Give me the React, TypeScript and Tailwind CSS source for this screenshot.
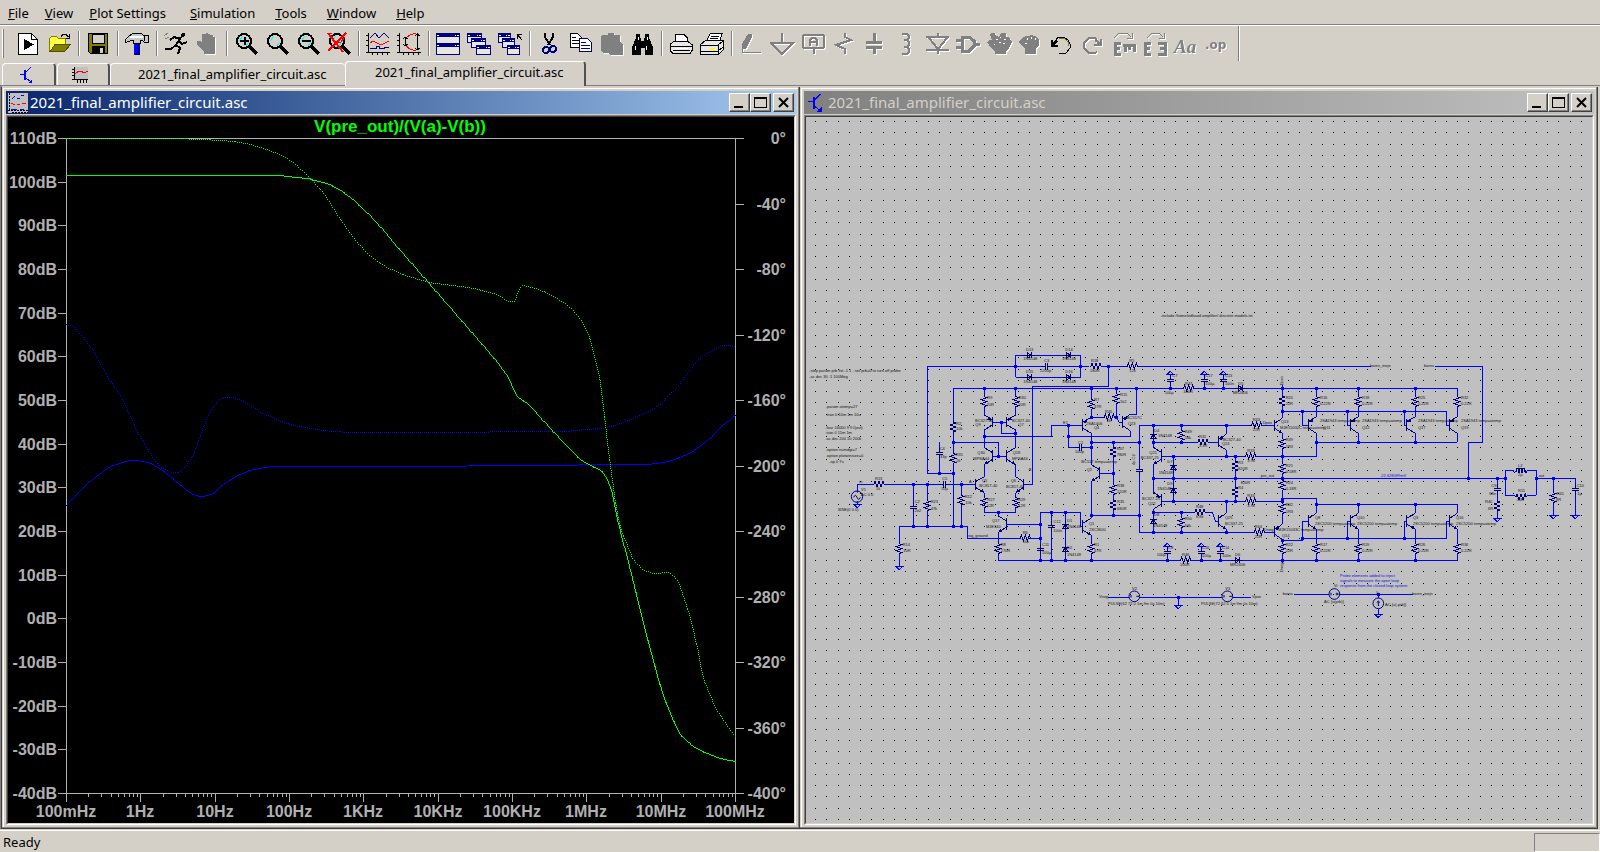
import type { ReactNode } from "react"
import { clsx } from "clsx"

type Point = [number, number]

const FILE_NAME = "2021_final_amplifier_circuit.asc"

const menus = ["File", "View", "Plot Settings", "Simulation", "Tools", "Window", "Help"]

/* ---------- toolbar icons, drawn on a 25x25 grid ---------- */

function Magnifier({ children }: { children?: ReactNode }) {
  return (
    <>
      <path d="M15 14l8 8" stroke="#000" strokeWidth="3" />
      <circle cx="10" cy="9" r="7" fill="#d4d0c8" stroke="#000" strokeWidth="2" />
      <path d="M5 9l4-5M12 14l3-4" stroke="#00ffff" strokeWidth="1" />
      {children}
    </>
  )
}

function MiniWindow({ x, y, w, h }: { x: number; y: number; w: number; h: number }) {
  return (
    <>
      <rect x={x} y={y} width={w} height={h} fill="#000080" />
      <rect x={x + 1} y={y + 4} width={w - 2} height={h - 5} fill="#e8e6e0" />
      <path d={`M${x + 1} ${y + 2}h2M${x + w - 5} ${y + 2}h1M${x + w - 3} ${y + 2}h2`} stroke="#fff" strokeWidth="1" />
    </>
  )
}

const icons: Record<string, ReactNode> = {
  Run: (
    <>
      <path d="M2.500 1.500h13l6 6v15h-19z" fill="#fff" stroke="#000" />
      <path d="M15.500 1.500v6h6" stroke="#000" />
      <path d="M8 7l10 5.500L8 18z" fill="#000" />
    </>
  ),
  Open: (
    <>
      <path d="M2.500 19.500v-13l2-2h5l2 2h7v6" fill="#ffff40" stroke="#808000" />
      <path d="M3 19.500l5-7h15.500l-6 7z" fill="#808000" stroke="#505000" />
      <path d="M14 4.500c2-3 5-3 7.500.500M22.500 2v4h-4" stroke="#000" />
    </>
  ),
  Save: (
    <>
      <path d="M2.500 1.500h19v20h-17l-2-2z" fill="#808000" stroke="#000" />
      <rect x="6" y="2" width="12" height="9" fill="#d4d0c8" stroke="#000" />
      <rect x="6" y="14" width="13" height="8" fill="#000" />
      <rect x="14" y="16" width="3" height="5" fill="#d4d0c8" />
    </>
  ),
  "Control Panel": (
    <>
      <path d="M9 11h6v11h-6z" fill="#0000ff" />
      <path d="M14 11v11h-5" stroke="#000080" strokeWidth="2" />
      <path d="M.500 10.500v-3l3-3l4-3h9l2 2h5v7h-4l-2-2h-2v3h-7v-3h-2l-3 1z" fill="#c8c8c8" stroke="#000" />
      <path d="M5 4.500h13" stroke="#fff" strokeWidth="2" />
      <path d="M19 3v6" stroke="#000" />
    </>
  ),
  Simulate: (
    <>
      <path d="M0 4l4-3M1 7l4-2M5 8l3-2" stroke="#808080" />
      <circle cx="19" cy="3" r="2" fill="#000" />
      <path d="M17 5l-5 8M16 7l-6-2l-4 3M15 9l3 3l5-2" stroke="#000" strokeWidth="2" />
      <path d="M12 13l-5 4l-6 0M12 13l4 3l-2 6" stroke="#000" strokeWidth="2" />
    </>
  ),
  Halt: <path d="M9 2h2v-1h2v1h2v1h3v2h2v17h-11v-3l-3-2l-4-5v-3h3l2 2v-9h2z" fill="currentColor" />,
  "Zoom In": (
    <Magnifier>
      <path d="M6 9h9M10.500 5v8" stroke="#000" strokeWidth="2" />
    </Magnifier>
  ),
  "Zoom Area": <Magnifier />,
  "Zoom Out": (
    <Magnifier>
      <path d="M6 9h9" stroke="#000" strokeWidth="2" />
    </Magnifier>
  ),
  "Zoom Full": (
    <Magnifier>
      <path d="M1 1l15 19M19 1l-18 18" stroke="#ff0000" strokeWidth="2" />
      <path d="M0 1h5M5 8l8 3l5-6" stroke="#ff0000" />
    </Magnifier>
  ),
  "Autorange Y": (
    <>
      <path d="M2.500 1v19M0 20.500h24M0 3.500h2M0 8.500h2M0 13.500h2M6.500 20v3M11.500 20v3M16.500 20v3M21.500 20v3" stroke="#000" />
      <path d="M4 6l5-5l4 5l5-5l5 5" stroke="#000080" />
      <path d="M4 11l3-2l6 3h4l6-3" stroke="#ff0000" />
      <path d="M4 16h6v-2h3v2h5v-1h5" stroke="#000080" />
    </>
  ),
  "Pan Plot": (
    <>
      <path d="M2.500 1v19M0 20.500h24M0 3.500h2M0 8.500h2M0 13.500h2M6.500 20v3M11.500 20v3M16.500 20v3M21.500 20v3" stroke="#000" />
      <path d="M9 6l4-3l6-2M9 14l4 3l6 2" stroke="#ff0000" />
      <path d="M8.500 5v9M6 7l2-2l3 2M6 12l2 2l3-2M20.500 1v17M18 4l2-2l3 2M18 16l2 2l3-2" stroke="#000" />
    </>
  ),
  "Tile Windows": (
    <>
      <MiniWindow x={0} y={1} w={24} h={11} />
      <MiniWindow x={0} y={11} w={24} h={12} />
    </>
  ),
  "Cascade Windows": (
    <>
      <MiniWindow x={0} y={1} w={15} h={10} />
      <MiniWindow x={4} y={6} w={15} h={10} />
      <MiniWindow x={9} y={13} w={15} h={10} />
    </>
  ),
  "Close Windows": (
    <>
      <MiniWindow x={0} y={1} w={13} h={10} />
      <MiniWindow x={4} y={6} w={13} h={10} />
      <MiniWindow x={9} y={13} w={13} h={10} />
      <path d="M19 7v-5h5M19 2l5 6" stroke="#000" />
    </>
  ),
  Cut: (
    <>
      <path d="M8 1v4l5 8M16 1v4l-5 8" stroke="#000" strokeWidth="2" />
      <circle cx="9" cy="18" r="3" stroke="#000080" strokeWidth="2" />
      <circle cx="16" cy="17" r="3" stroke="#000080" strokeWidth="2" />
    </>
  ),
  Copy: (
    <>
      <path d="M2.500 1.500h7l4 4v10h-11z" fill="#fff" stroke="#000" />
      <path d="M4 5h4M4 8h7M4 11h7" stroke="#000" />
      <path d="M11.500 6.500h8l4 4v9h-12z" fill="#fff" stroke="#000080" />
      <path d="M13 10h5M13 13h9M13 16h9" stroke="#000080" />
    </>
  ),
  Paste: <path d="M2 4l2-1h5v-2h6v2h6v7l3 3v10h-13l-2-2h-5l-2-2z" fill="currentColor" />,
  Find: (
    <>
      <path d="M6 2h4v4h1v3h3v-3h1v-4h4v4l4 9v8h-8v-7h-4v7h-9v-8l4-9z" fill="#000" />
      <path d="M8 5v3M17 5v3M5 14v4M16 14v4" stroke="#fff" />
    </>
  ),
  Print: (
    <>
      <path d="M6.500 10v-7l2-1h6l4 4v4z" fill="#fff" stroke="#000" />
      <path d="M2 11.500l3-2h14l4 3v6l-2 3h-17l-3-3v-5z" fill="#e8e8e8" stroke="#000" />
      <path d="M2 14h21M4 18h17" stroke="#000" />
      <path d="M6 16h13" stroke="#fff" />
    </>
  ),
  "Print Setup": (
    <>
      <path d="M6.500 9l4-8h12l-3 8z" fill="#fff" stroke="#000" />
      <path d="M11 4h8M10 6h8" stroke="#000" />
      <path d="M.500 12.500l5-4h18v9l-5 5h-18z" fill="#e8e8e8" stroke="#000" />
      <path d="M0 13.500h18.500v9M18 13l5-4M0 19h18l5-4" stroke="#000" />
      <path d="M10 16.500h5" stroke="#ffff00" strokeWidth="2" />
    </>
  ),
  Wire: (
    <>
      <path d="M9 2h4v3l-6 12h-4v-5z" fill="currentColor" />
      <path d="M3 15v6M3 20.500h19" stroke="currentColor" strokeWidth="1" />
    </>
  ),
  Ground: <path d="M12 1v10M1 11h22l-11 11z" stroke="currentColor" strokeWidth="2" />,
  "Label Net": (
    <>
      <rect x="2" y="3" width="21" height="13" rx="2" stroke="currentColor" strokeWidth="2" />
      <path d="M12.500 16v6" stroke="currentColor" strokeWidth="2" />
      <path d="M9 14v-6l2-2h3l2 2v6M9 10h7" stroke="currentColor" strokeWidth="2" />
    </>
  ),
  Resistor: <path d="M13 1v4l6 3l-15 5l9 4v5" stroke="currentColor" strokeWidth="2" />,
  Capacitor: <path d="M11 1v8M3 10h16M3 15h16M11 15v7" stroke="currentColor" strokeWidth="3" />,
  Inductor: <path d="M8 2h5l2 2v2l-2 2h-3h3l2 2v3l-2 2h-3h3l2 2v3l-2 2h-5" stroke="currentColor" strokeWidth="2" />,
  Diode: <path d="M13 1v4M1 5h23M4 6l9 11l9-11M1 18h23M13 18v4" stroke="currentColor" strokeWidth="2" />,
  Component: <path d="M6 5h7l5 4v5l-5 5h-7zM0 8h5M0 15h5M18 12h6" stroke="currentColor" strokeWidth="3" />,
  Move: (
    <>
      <path d="M4 1h4l1 3l3 1l2-4h5v4h3l3 5l-3 6l-3 3v3h-11v-3l-4-3l-4-6l2-2h3l-2-5z" fill="currentColor" />
      <path d="M9 7h2M13 5h1M17 7h2M12 10h2M16 11h2M7 12h1" stroke="#fff" />
    </>
  ),
  Drag: (
    <>
      <path d="M5 5l3-1h3l2-1l3 1l3 1l2 3v5l-3 4v5h-11v-5l-6-6l1-3z" fill="currentColor" />
      <path d="M9 6v2M13 5v2M17 6v2M7 11h2" stroke="#fff" />
    </>
  ),
  Undo: (
    <>
      <path d="M4 12l5-7h6l4 3l2 4v4l-4 5h-7" stroke="#000" strokeWidth="1" />
      <path d="M10 6h5l4 4v4" stroke="#808000" />
      <path d="M3 8v6h6M4 13l4-4" stroke="#000" strokeWidth="2" />
    </>
  ),
  Redo: (
    <>
      <path d="M19 12l-4-6h-6l-5 5v5l5 5h6l2-1" stroke="currentColor" strokeWidth="2" />
      <path d="M21 7v6h-7M20 12l-5-4" stroke="currentColor" strokeWidth="2" />
    </>
  ),
  Rotate: (
    <>
      <path d="M3 6l5-5h8l4 4M21 1v5h-5" stroke="currentColor" />
      <path d="M10 11h-6v11h6M4 16h5" stroke="currentColor" strokeWidth="3" />
      <path d="M12 13h13M14 12v8M18 12v6M23 12v8" stroke="currentColor" strokeWidth="3" />
    </>
  ),
  Mirror: (
    <>
      <path d="M5 6l5-5h7l4 4M22 1v5h-5" stroke="currentColor" />
      <path d="M9 11h-6v11h6M3 16h5M16 11h7v11h-7M23 16h-5" stroke="currentColor" strokeWidth="3" />
    </>
  ),
  Text: (
    <text x="1" y="21" fontFamily="Liberation Serif, serif" fontStyle="italic" fontWeight="bold" fontSize="19" fill="currentColor">
      Aa
    </text>
  ),
  "SPICE Directive": (
    <text x="1" y="17" fontFamily="DejaVu Sans, sans-serif" fontWeight="bold" fontSize="12" fill="currentColor">
      .op
    </text>
  ),
}

const toolGroups = [
  ["Run", "Open"],
  ["Save"],
  ["Control Panel"],
  ["Simulate", "Halt"],
  ["Zoom In", "Zoom Area", "Zoom Out", "Zoom Full"],
  ["Autorange Y", "Pan Plot"],
  ["Tile Windows", "Cascade Windows", "Close Windows"],
  ["Cut", "Copy", "Paste", "Find"],
  ["Print", "Print Setup"],
  [
    "Wire", "Ground", "Label Net", "Resistor", "Capacitor", "Inductor", "Diode", "Component",
    "Move", "Drag", "Undo", "Redo", "Rotate", "Mirror", "Text", "SPICE Directive",
  ],
]

const disabledTools = new Set(["Halt", "Paste", ...toolGroups[9].filter((name) => name !== "Undo")])

function MenuBar() {
  return (
    <nav className="flex h-[25px] shrink-0 items-end border-b border-[#808080] pb-px text-[13px] leading-5">
      {menus.map((name, i) => (
        <button key={name} type="button" className={clsx(i < 2 && "px-2", i === 2 && "pl-2 pr-3.5", i > 2 && "px-2.5")}>
          <span className="underline">{name[0]}</span>
          {name.slice(1)}
        </button>
      ))}
    </nav>
  )
}

function Toolbar() {
  return (
    <div className="flex h-[37px] shrink-0 items-start border-t border-white">
      <div className="mt-[3px] ml-0.5 mr-[9px] h-[29px] w-0.5 border-r border-[#808080] bg-white" />
      {toolGroups.map((group, i) => (
        <div key={group[0]} className="flex shrink-0">
          {i > 0 && (
            <div className="flex w-2 justify-center pt-[5px]">
              <div className="h-[25px] w-0.5 border-l border-[#808080] bg-white" />
            </div>
          )}
          {group.map((name) => {
            const disabled = disabledTools.has(name)
            return (
              <button key={name} type="button" aria-label={name} disabled={disabled} className="h-8 w-[31px] px-[3px] pt-1">
                <svg
                  viewBox="0 0 25 25"
                  fill="none"
                  shapeRendering="crispEdges"
                  className={clsx("h-[25px] w-[25px]", disabled && "text-[#808080] drop-shadow-[1px_1px_0_#fff]")}
                >
                  {icons[name]}
                </svg>
              </button>
            )
          })}
        </div>
      ))}
      <div className="ml-1.5 h-[35px] w-0.5 border-l border-[#808080] bg-white" />
    </div>
  )
}

function TransistorGlyph({ className }: { className?: string }) {
  return (
    <svg viewBox="0 0 14 18" fill="none" shapeRendering="crispEdges" className={className}>
      <path d="M0 8h5" stroke="#0000ff" strokeWidth="1" />
      <path d="M5 4v10" stroke="#0000ff" strokeWidth="2" />
      <path d="M6 6l5-5M6 12l5 4" stroke="#0000ff" />
      <path d="M12 17h-4l4-4z" fill="#0000ff" />
    </svg>
  )
}

function PlotGlyph({ className }: { className?: string }) {
  return (
    <svg viewBox="0 0 16 16" fill="none" shapeRendering="crispEdges" className={className}>
      <rect x="2" width="14" height="13" fill="#c0c0c0" />
      <path d="M2.500 0v13M0 12.500h16M0 2.500h2M0 5.500h2M0 8.500h2M5.500 13v3M8.500 13v3M11.500 13v3M14.500 13v3" stroke="#000" />
      <path d="M3 7l4-3h2l3 2l4-2" stroke="#ff0000" />
    </svg>
  )
}

function TabStrip() {
  const tab = "shrink-0 rounded-t-sm border-l border-t border-l-white border-t-white"
  const edge = "border-r-2 border-r-[#505050]"
  return (
    <div role="tablist" className="flex h-6 shrink-0 items-end border-b border-[#808080] pl-0.5 text-[13px]">
      <button role="tab" aria-label="Schematic" className={clsx(tab, edge, "flex h-[22px] w-[54px] items-center pl-[17px]")}>
        <TransistorGlyph className="h-[18px] w-3.5" />
      </button>
      <button role="tab" aria-label="Waveform" className={clsx(tab, edge, "ml-px flex h-[22px] w-[53px] items-center pl-3.5")}>
        <PlotGlyph className="h-4 w-4" />
      </button>
      <button role="tab" className={clsx(tab, "h-[22px] w-[235px] pl-[27px] text-left")}>
        {FILE_NAME}
      </button>
      <button role="tab" aria-selected className={clsx(tab, edge, "-mb-px h-[25px] w-[241px] bg-[#d4d0c8] pb-0.5 pl-[29px] text-left")}>
        {FILE_NAME}
      </button>
    </div>
  )
}

/* ---------- MDI child window ---------- */

const captionGlyphs: Record<string, ReactNode> = {
  Minimize: <rect x="3" y="12" width="9" height="2" fill="#000" />,
  Maximize: <path d="M2 3h13v11h-13zM3 5v8h11v-8z" fill="#000" fillRule="evenodd" />,
  Close: <path d="M4 4l9 9M13 4l-9 9" stroke="#000" strokeWidth="2" />,
}

interface ChildWindowProps {
  active?: boolean
  icon: ReactNode
  children: ReactNode
}

function ChildWindow({ active = false, icon, children }: ChildWindowProps) {
  return (
    <section className="flex min-w-0 flex-1 border-r border-b border-[#404040] bg-[#d4d0c8]">
      <div className="flex min-w-0 flex-1 flex-col border-r border-b border-[#808080] pl-px pt-px">
        <div className="flex min-h-0 flex-1 flex-col border-l border-t border-white p-0.5">
          <header
            className={clsx(
              "flex h-[23px] shrink-0 items-center bg-linear-to-r px-0.5 text-[15px]",
              active ? "from-[#0a246a] to-[#a6caf0] text-white" : "from-[#808080] to-[#c0c0c0] text-[#d4d0c8]",
            )}
          >
            <span className="flex h-5 w-5 items-center justify-center">{icon}</span>
            <h2 className="ml-0.5 flex-1 truncate pb-0.5 leading-5">{FILE_NAME}</h2>
            {Object.entries(captionGlyphs).map(([name, glyph]) => (
              <button
                key={name}
                type="button"
                aria-label={name}
                className="flex h-[19px] w-[21px] items-center justify-center border border-t-white border-l-white border-r-[#404040] border-b-[#404040] bg-[#d4d0c8] shadow-[inset_-1px_-1px_0_#808080] last:ml-0.5"
              >
                <svg viewBox="0 0 17 17" fill="none" className="h-[17px] w-[17px]">
                  {glyph}
                </svg>
              </button>
            ))}
          </header>
          <div className="mt-px flex min-h-0 flex-1 border border-t-[#808080] border-l-[#808080] border-r-white border-b-white">
            <div className="min-w-0 flex-1 border border-t-[#404040] border-l-[#404040] border-r-[#d4d0c8] border-b-[#d4d0c8]">
              {children}
            </div>
          </div>
        </div>
      </div>
    </section>
  )
}

/* ---------- bode plot ---------- */

const gainTrace: Point[] = [
  [66, 175], [276, 175], [296, 177], [306, 178], [315, 180], [326, 183], [340, 190], [350, 197], [362, 208],
  [376, 222], [400, 250], [460, 319], [500, 366], [507, 376], [512, 386], [517, 396], [522, 400], [527, 403],
  [538, 415], [567, 446], [578, 457], [588, 464], [600, 470], [605, 476], [610, 487], [618, 523], [627, 558],
  [647, 638], [662, 692], [670, 713], [680, 734], [687, 741], [696, 748], [707, 753], [720, 758], [735, 761],
]

const phaseTrace: Point[] = [
  [66, 138], [170, 138], [200, 139], [220, 140], [240, 142], [260, 147], [283, 156], [303, 171], [312, 180],
  [323, 193], [333, 208], [350, 233], [367, 253], [380, 263], [400, 273], [415, 278], [430, 282], [467, 287],
  [490, 292], [500, 296], [508, 301], [513, 301], [518, 291], [523, 285], [528, 286], [547, 293], [567, 305],
  [580, 319], [587, 331], [593, 353], [599, 377], [603, 407], [608, 450], [612, 480], [616, 508], [622, 533],
  [627, 545], [632, 557], [638, 565], [647, 571], [655, 573], [666, 572], [672, 575], [677, 581], [687, 608],
  [697, 648], [703, 677], [715, 706], [725, 723], [735, 736],
]

const secondPhaseTrace: Point[] = [
  [66, 324], [73, 327], [80, 334], [92, 349], [102, 367], [114, 387], [122, 399], [133, 423], [143, 442],
  [153, 458], [163, 468], [172, 472], [178, 472], [185, 466], [192, 455], [200, 435], [207, 417], [215, 404],
  [222, 398], [230, 397], [238, 399], [263, 413], [287, 423], [310, 428], [333, 431], [360, 432], [486, 432],
  [490, 431], [560, 431], [585, 429], [600, 428], [620, 423], [637, 416], [655, 407], [677, 386], [688, 372],
  [700, 358], [712, 350], [723, 345], [735, 346],
]

const secondGainTrace: Point[] = [
  [66, 505], [83, 487], [100, 473], [113, 465], [132, 460], [147, 462], [163, 471], [183, 487], [193, 494],
  [200, 496], [210, 494], [223, 484], [240, 474], [253, 469], [277, 466], [466, 466], [468, 465], [576, 465],
  [579, 464], [642, 464], [663, 462], [677, 458], [690, 452], [707, 440], [720, 427], [735, 415],
]

// Cubic interpolation through the points, plotted as single pixels every `step` along the longer axis.
function plotPixels(points: Point[], step: number) {
  const n = points.length
  const slopes = points.slice(1).map(([x, y], i) => (y - points[i][1]) / (x - points[i][0]))
  const tangents = points.map((_, i) => {
    if (i === 0) return slopes[0]
    if (i === n - 1) return slopes[n - 2]
    const a = slopes[i - 1]
    const b = slopes[i]
    return a * b <= 0 ? 0 : (2 * a * b) / (a + b)
  })

  let d = ""
  let lastX = -100
  let lastY = -100
  for (let i = 0; i < n - 1; i++) {
    const [x0, y0] = points[i]
    const [x1, y1] = points[i + 1]
    const w = x1 - x0
    const samples = Math.ceil((w + Math.abs(y1 - y0)) * 8)
    for (let s = 0; s < samples; s++) {
      const t = s / samples
      const x = x0 + w * t
      const y =
        (2 * t ** 3 - 3 * t ** 2 + 1) * y0 +
        (t ** 3 - 2 * t ** 2 + t) * w * tangents[i] +
        (3 * t ** 2 - 2 * t ** 3) * y1 +
        (t ** 3 - t ** 2) * w * tangents[i + 1]
      if (Math.max(Math.abs(x - lastX), Math.abs(y - lastY)) >= step - 0.1) {
        d += `M${Math.round(x)} ${Math.round(y)}h1v1h-1z`
        lastX = x
        lastY = y
      }
    }
  }
  return d
}

const LEFT = 66
const RIGHT = 735
const TOP = 138
const BOTTOM = 793

const freqLabels = ["100mHz", "1Hz", "10Hz", "100Hz", "1KHz", "10KHz", "100KHz", "1MHz", "10MHz", "100MHz"]

function BodePlot() {
  const decade = (RIGHT - LEFT) / 9
  const gains = Array.from({ length: 16 }, (_, i) => 110 - i * 10)
  const phases = Array.from({ length: 11 }, (_, i) => -40 * i)

  return (
    <svg
      viewBox="8 117 786 706"
      preserveAspectRatio="xMidYMid meet"
      className="block h-full w-full bg-black"
      fontFamily="Liberation Sans, Arial, sans-serif"
      fontWeight="bold"
      fontSize="16"
    >
      <text x="400" y="132" textAnchor="middle" fill="#00ff00" fontSize="17">
        V(pre_out)/(V(a)-V(b))
      </text>
      <g fill="#b0b0b0">
        {gains.map((db, i) => (
          <text key={db} x="57" y={Math.round(TOP + (i * (BOTTOM - TOP)) / 15) + 6} textAnchor="end">
            {db}dB
          </text>
        ))}
        {phases.map((deg, i) => (
          <text key={deg} x="786" y={Math.round(TOP + (i * (BOTTOM - TOP)) / 10) + 6} textAnchor="end">
            {deg}°
          </text>
        ))}
        {freqLabels.map((label, i) => (
          <text key={label} x={Math.round(LEFT + i * decade)} y="817" textAnchor="middle">
            {label}
          </text>
        ))}
      </g>
      <g shapeRendering="crispEdges">
        <g fill="#b0b0b0">
          <rect x={LEFT} y={TOP} width={RIGHT - LEFT} height="1" />
          <rect x={LEFT} y={BOTTOM} width={RIGHT - LEFT} height="1" />
          <rect x={LEFT} y={TOP} width="1" height={BOTTOM - TOP} />
          <rect x={RIGHT} y={TOP} width="1" height={BOTTOM - TOP} />
          {gains.map((db, i) => (
            <rect key={db} x={LEFT - 8} y={Math.round(TOP + (i * (BOTTOM - TOP)) / 15)} width="8" height="1" />
          ))}
          {phases.map((deg, i) => (
            <rect key={deg} x={RIGHT} y={Math.round(TOP + (i * (BOTTOM - TOP)) / 10)} width="9" height="1" />
          ))}
          {freqLabels.map((label, i) => (
            <rect key={label} x={Math.round(LEFT + i * decade)} y={BOTTOM} width="1" height="9" />
          ))}
          {freqLabels.slice(1).flatMap((label, i) =>
            [2, 3, 4, 5, 6, 7, 8, 9].map((m) => (
              <rect key={label + m} x={Math.round(LEFT + (i + Math.log10(m)) * decade)} y={BOTTOM} width="1" height="4" />
            )),
          )}
        </g>
        <path d={plotPixels(secondPhaseTrace, 2)} fill="#0000ff" />
        <path d={plotPixels(secondGainTrace, 1)} fill="#0000ff" />
        <path d={plotPixels(phaseTrace, 2)} fill="#00ff00" />
        <path d={plotPixels(gainTrace, 1)} fill="#00ff00" />
      </g>
    </svg>
  )
}

/* ---------- schematic ---------- */

const wires = [
  // feedback line and anti-parallel diodes
  "M382 520V199H732M744 199H868M905 199H978M1014 199H1712",
  "M647 166V232M647 166H841V232H647M925 199V259H697V553H670",
  // supply rails
  "M460 265H1147M1183 265H1972M595 781H1138M1174 781H1972",
  // input stage
  "M382 520H460M460 265V362M460 398V457M460 490V679M460 427H595V469M418 427V458M418 464V520",
  "M553 265V286M553 322V345M647 265V286M647 322V345M578 367H620M604 367V400H647M553 388V443M647 388V443",
  "M578 469H620M553 409H755V376H847M553 494V530M647 494V530",
  "M553 578V590M553 625V637H647V625M647 578V590M595 637V648M620 673H722M595 697V727M595 763V781",
  "M172 575V553H218M254 553H430M438 553H526M340 553V619M340 624V679M382 553V598M382 634V679",
  "M484 553V582M484 618V679M298 679H502V715H657M692 715H722M298 679V727M298 763V798M172 606V613",
  "M722 637V745M722 751V781M722 637H842V679H847M754 637V678M754 683V781M796 637V781",
  // voltage gain stage
  "M874 265V294M874 330V352H909M945 352H949M949 265V277M949 313V352L958 367H967M1009 265V343H991M991 392V409H805",
  "M805 376V442H836M843 442H874M874 400V494M874 427H1018M940 427V437M940 473V550M940 586V596M940 632V646",
  "M940 520H899M874 544V655M874 646H1018M874 706V727M874 763V781",
  "M1018 376V508M1018 514V697M1018 376H1351M1387 376H1423M1018 697H1359M1395 697H1423",
  // protection and drivers
  "M1060 376V442M1060 427H1190M1226 427H1255M1144 376V387M1144 423V427M1279 376V403M1279 450V469",
  "M1060 494V577M1084 469H1333M1369 469H1549V427M1120 469V604M1060 535H2116M1306 469V479M1306 515V557M1306 593V604",
  "M1084 604H1333M1369 604H1447M1447 595H1549V613M1060 628V697M1060 637H1181M1217 637H1237L1246 664H1255",
  "M1279 604V640M1279 688V697M1144 637V649M1144 685V697",
  "M1447 256V284M1447 320V355M1447 400V412M1447 448V487M1447 523V540M1447 571V607M1447 643V673M1447 718V727M1447 763V790",
  "M1447 334H1939V376H1948M1447 721H1507V664H1525M1507 715H1939V664H1948",
  "M1507 334V376H1525M1642 334V376H1651M1813 334V376H1819M1642 715V664H1651M1813 715V664H1819",
  "M1549 427H1972M1549 613H1972",
  "M1549 265V286M1675 265V286M1846 265V286M1972 265V286M1549 322V350M1675 322V350M1846 322V350M1972 322V350",
  "M1549 400V427M1675 400V427M1846 400V427M1972 400V427M1549 613V640M1675 613V640M1846 613V640M1972 613V640",
  "M1549 688V727M1675 688V727M1846 688V727M1972 688V727M1549 763V781M1675 763V781M1846 763V781M1972 763V781",
  // rail decoupling
  "M1111 265V244M1111 238V224M1213 265V244M1213 238V224M1270 265V244M1270 238V224",
  "M1102 781V760M1102 754V740M1204 781V760M1204 754V740M1261 781V760M1261 754V740",
  // output network
  "M1905 199H2047V427H2005V535M2092 535V567M2092 572V599M2092 635V655M2116 511V586M2116 511H2142M2182 511H2209V586",
  "M2116 586H2144M2180 586H2209M2209 535H2326M2260 535V574M2260 610V646M2326 535V567M2326 572V646",
  // probes and supplies
  "M924 892H987M1019 892H1266M1298 892H1354M1135 892V915M1482 883H1587M1619 883H1839M1735 883V894M1735 926V943",
]

const junctions: Point[] = [
  [647, 199], [841, 199], [925, 199], [553, 265], [647, 265], [874, 265], [949, 265], [1009, 265], [1111, 265],
  [1213, 265], [1270, 265], [1447, 265], [1549, 265], [1675, 265], [1846, 265], [604, 367], [647, 400], [553, 409],
  [460, 427], [595, 469], [418, 520], [460, 520], [340, 553], [382, 553], [484, 553], [340, 679], [382, 679],
  [460, 679], [484, 679], [595, 637], [722, 673], [722, 715], [754, 637], [796, 637], [722, 781], [754, 781],
  [796, 781], [874, 781], [1102, 781], [1204, 781], [1261, 781], [1447, 781], [1549, 781], [1675, 781], [1846, 781],
  [874, 352], [949, 352], [805, 376], [805, 409], [874, 427], [874, 442], [940, 427], [1018, 427], [940, 520],
  [874, 646], [940, 646], [1018, 646], [1060, 376], [1144, 376], [1279, 376], [1060, 427], [1144, 427],
  [1120, 469], [1279, 469], [1306, 469], [1447, 469], [1060, 535], [1120, 535], [1306, 535], [1447, 535],
  [1120, 604], [1279, 604], [1306, 604], [1447, 604], [1447, 598], [1060, 637], [1144, 637], [1060, 697],
  [1144, 697], [1279, 697], [1447, 334], [1507, 334], [1642, 334], [1813, 334], [1447, 721], [1507, 715],
  [1642, 715], [1813, 715], [1549, 427], [1675, 427], [1846, 427], [1549, 613], [1675, 613], [1846, 613],
  [2005, 535], [2092, 535], [2116, 535], [2209, 535], [2260, 535], [1135, 892], [1735, 883],
]

const verticalResistors: Point[] = [
  [460, 380], [460, 474], [553, 304], [647, 304], [553, 607], [647, 607], [595, 745], [382, 616], [484, 600],
  [298, 745], [874, 312], [949, 295], [940, 455], [940, 568], [940, 614], [874, 745], [1144, 405], [1306, 497],
  [1306, 575], [1144, 667], [1447, 302], [1447, 430], [1447, 505], [1447, 555], [1447, 625], [1447, 745],
  [1549, 304], [1675, 304], [1846, 304], [1972, 304], [1549, 745], [1675, 745], [1846, 745], [1972, 745],
  [2092, 617], [2260, 592],
]

const horizontalResistors: Point[] = [
  [887, 199], [996, 199], [236, 553], [675, 715], [927, 352], [1165, 265], [1156, 781], [1369, 376], [1377, 697],
  [1208, 427], [1351, 469], [1351, 604], [1199, 637], [2162, 590],
]

const verticalCaps: Point[] = [
  [418, 461], [340, 621], [722, 748], [754, 680], [1018, 511], [1111, 241], [1213, 241], [1270, 241],
  [1102, 757], [1204, 757], [1261, 757], [2092, 569], [2326, 569],
]

const horizontalCaps: Point[] = [[738, 199], [434, 553], [840, 442]]

const horizontalDiodes: Point[] = [[688, 166], [806, 166], [688, 232], [806, 232], [1322, 265], [1312, 781]]

const verticalDiodes: Point[] = [[796, 679], [796, 748], [1060, 409], [1120, 502], [1120, 571], [1060, 664]]

// base bar x, collector/emitter column x, top pin y, bottom pin y, end that carries the arrow
const transistors: [number, number, number, number, "top" | "bottom"][] = [
  [578, 553, 345, 390, "top"], [620, 647, 345, 390, "top"], [578, 553, 443, 494, "bottom"],
  [620, 647, 443, 494, "bottom"], [526, 553, 530, 578, "bottom"], [670, 647, 530, 578, "bottom"],
  [620, 595, 648, 697, "bottom"], [847, 874, 655, 706, "bottom"], [847, 874, 352, 400, "top"],
  [967, 991, 343, 392, "top"], [899, 874, 494, 544, "bottom"], [1255, 1279, 403, 450, "top"],
  [1084, 1060, 442, 494, "bottom"], [1084, 1060, 577, 628, "top"], [1255, 1279, 640, 688, "bottom"],
  [1423, 1447, 355, 400, "bottom"], [1423, 1447, 673, 718, "top"],
  [1525, 1549, 350, 400, "top"], [1651, 1675, 350, 400, "top"], [1819, 1846, 350, 400, "top"],
  [1948, 1972, 350, 400, "top"], [1525, 1549, 640, 688, "bottom"], [1651, 1675, 640, 688, "bottom"],
  [1819, 1846, 640, 688, "bottom"], [1948, 1972, 640, 688, "bottom"],
]

const downGrounds: Point[] = [[172, 613], [298, 799], [1135, 916], [2092, 655], [2260, 646], [2326, 646], [1735, 943]]

const upGrounds: Point[] = [[1111, 223], [1213, 223], [1270, 223], [1102, 739], [1204, 739], [1261, 739]]

const labels: [number, number, string][] = [
  [1082, 51, ".include /home/edkaod amplifier/ discrete models.txt"],
  [28, 216, ".step param prb list -1 1 ; set prb=0 to turn off probe"],
  [28, 234, ".ac dec 30 .1 100Meg"],
  [78, 324, ".param atemp=27"],
  [78, 347, ".tran 0 10m 1m 10u"],
  [76, 387, ".four 16000 9 9 I(out)"],
  [76, 402, ".tran 0 11m 1m"],
  [76, 419, ".ac dec 200 10 200k"],
  [78, 453, ".option numdgt=7"],
  [78, 471, ".option plotwinsize=0"],
  [88, 489, ".op 0 7u"],
  [678, 153, "D13"], [670, 179, "1N4148"], [678, 219, "D15"], [670, 248, "1N4148"],
  [796, 153, "D14"], [786, 179, "1N4148"], [796, 219, "D16"], [786, 248, "1N4148"],
  [732, 186, "C3"], [720, 216, "2200p"], [873, 186, "R18"], [870, 216, "180R"], [988, 186, "R5"], [988, 216, "12k"],
  [562, 297, "R9"], [560, 318, "20R"], [656, 297, "R30"], [655, 318, "20R"],
  [468, 374, "R2"], [468, 391, "10k"], [467, 467, "R31"], [469, 485, "2k"], [419, 450, "C4"], [420, 474, "33p"],
  [525, 365, "BC327-40"], [526, 378, "Q9"], [636, 365, "BC327-40"], [655, 378, "Q7"],
  [532, 461, "Q30"], [520, 479, "MPSA44"], [638, 461, "Q18"], [636, 479, "MPSA44"],
  [546, 545, "Q5"], [538, 560, "BC817-40"], [632, 545, "Q6"], [618, 563, "BC817-40"],
  [562, 603, "R27"], [560, 620, "12R"], [654, 603, "R29"], [654, 620, "12R"],
  [576, 665, "Q17"], [558, 683, "MJE340"], [602, 738, "R8"], [602, 756, "270R"], [504, 711, "sig_ground"],
  [225, 539, "R13"], [228, 570, "1k"], [183, 573, "V1"], [183, 588, "AC 0 0"], [113, 633, "SINE(0 0 0)"],
  [178, 550, "in"], [344, 609, "C2"], [344, 636, "2n2"], [392, 609, "R23"], [392, 629, "47k"],
  [426, 539, "C5"], [423, 570, "10µ"], [494, 594, "R12"], [496, 612, "10k"], [507, 550, "A"], [686, 514, "B"],
  [308, 738, "R14"], [310, 756, "10R"], [668, 702, "R6"], [668, 728, "10k"],
  [726, 738, "C11"], [726, 762, "100µ"], [760, 669, "C12"], [760, 695, "100n"],
  [801, 666, "D1"], [801, 684, "1N4148"], [801, 747, "D2"], [801, 768, "1N4148"],
  [882, 304, "R7"], [882, 324, "47R"], [960, 288, "R15"], [960, 308, "1k2"], [915, 339, "R45"], [920, 366, "2k"],
  [858, 374, "2SA1406"], [882, 387, "Q4"], [980, 356, "BC557C"], [984, 374, "Q23"], [789, 372, "E1"],
  [834, 431, "C1"], [825, 459, "100p"], [844, 489, "BC517 temp=atemp"], [860, 513, "Q2"],
  [950, 450, "R37"], [950, 467, "780R"], [951, 561, "R38"], [951, 579, "120R"], [951, 609, "R35"], [951, 629, "680R"],
  [867, 674, "Q1"], [867, 693, "2SC3600"], [882, 738, "R1"], [882, 756, "47R"],
  [1117, 231, "C7"], [1094, 282, "100µ"], [1155, 254, "R47"], [1150, 279, "100R"], [1216, 231, "C17"], [1216, 255, "100µ"],
  [1275, 231, "C13"], [1275, 255, "100n"], [1315, 255, "D5"], [1298, 281, "MR2406"],
  [1062, 396, "D4"], [1074, 411, "1N4148"], [1154, 398, "R49"], [1154, 416, "56k"], [1197, 413, "R31"], [1197, 442, "3.3R"],
  [1268, 423, "BC327-40"], [1266, 434, "Q24"], [1048, 461, "Q21"], [1022, 476, "BC337-25"],
  [1102, 489, "D7"], [1076, 522, "1N4148"], [1102, 555, "D9"], [1072, 570, "1N4148"],
  [1342, 456, "R33"], [1342, 486, "3.9k"], [1314, 492, "R3"], [1314, 510, "820R"], [1322, 552, "820R"], [1314, 567, "R4"],
  [1342, 590, "R34"], [1342, 620, "3.9k"], [1026, 600, "BC327-25"], [1044, 615, "Q22"],
  [1062, 648, "D8"], [1060, 681, "1N4148"], [1154, 660, "R50"], [1154, 681, "56k"], [1188, 624, "R48"], [1188, 654, "6.8k"],
  [1275, 657, "Q25"], [1275, 675, "BC337-25"], [1358, 363, "R43"], [1358, 392, "22R"], [1388, 372, "Dpos"],
  [1364, 684, "R44"], [1364, 714, "22R"], [1392, 693, "Dneg"], [1382, 531, "pre_out"],
  [1457, 297, "R20"], [1457, 316, "22R"], [1443, 369, "Q13"], [1440, 387, "MJE15032C temp=atemp"],
  [1457, 423, "R39"], [1457, 443, "1R3"], [1457, 500, "R21"], [1457, 519, "0.18R"], [1457, 552, "R24"], [1457, 570, "0.18R"],
  [1457, 618, "R42"], [1457, 639, "1R3"], [1434, 693, "MJE15033C temp=atemp"], [1446, 711, "Q14"],
  [1457, 738, "R22"], [1457, 756, "22R"],
  [1104, 747, "C8"], [1070, 768, "100µ"], [1146, 768, "R46"], [1140, 798, "100R"], [1206, 747, "C16"], [1206, 771, "100µ"],
  [1266, 747, "C14"], [1266, 771, "100n"], [1305, 767, "D6"], [1290, 798, "MR2406"],
  [996, 870, "V2"], [1276, 870, "V3"], [897, 894, "Vneg"], [1356, 894, "Vpos"],
  [924, 915, "PULSE(62 72 0 1m 9m 0s 10m)"], [1203, 915, "PULSE(72 62 0 1m 9m 0s 10m)"], [1448, 885, "borns"],
  [1560, 297, "R16"], [1560, 314, "0.22R"], [1686, 297, "R18"], [1686, 314, "0.22R"],
  [1854, 297, "R25"], [1854, 314, "0.22R"], [1983, 297, "R32"], [1983, 314, "0.22R"],
  [1560, 366, "2SA1943 temp=atemp"], [1570, 387, "Q11"], [1686, 366, "2SA1943 temp=atemp"], [1686, 387, "Q12"],
  [1854, 366, "2SA1943 temp=atemp"], [1854, 387, "Q17"], [1983, 366, "2SA1943 temp=atemp"], [1983, 387, "Q19"],
  [1545, 657, "Q8"], [1545, 675, "2SC5200 temp=atemp"], [1671, 657, "Q10"], [1671, 675, "2SC5200 temp=atemp"],
  [1839, 657, "Q3"], [1839, 675, "2SC5200 temp=atemp"], [1968, 657, "Q16"], [1968, 675, "2SC5200 temp=atemp"],
  [1560, 738, "R17"], [1560, 756, "0.22R"], [1686, 738, "R19"], [1686, 756, "0.22R"],
  [1854, 738, "R26"], [1854, 756, "0.22R"], [1983, 738, "R36"], [1983, 756, "0.22R"],
  [1710, 201, "borns_inejn"], [1872, 201, "borns"],
  [2154, 501, "L2"], [2154, 528, "2µ"], [2154, 575, "R11"], [2150, 602, "10R"], [2216, 531, "out"],
  [2074, 560, "C9"], [2068, 585, "68n"], [2055, 608, "R40"], [2064, 630, "6R"],
  [2270, 584, "R41"], [2268, 603, "8R"], [2330, 560, "C10"], [2332, 585, "1µ"],
  [1602, 861, "Vi"], [1572, 909, "AC {u(prb)}"], [1729, 882, "Ii"], [1755, 918, "AC {u(-prb)}"], [1836, 885, "borns_inejn"],
]

const comments: [number, number, string][] = [
  [1740, 531, "-22.628089mV"],
  [1620, 831, "Probe elements added to inject"],
  [1620, 846, "signals to measure the open loop"],
  [1620, 861, "response from the closed loop system"],
]

function Resistor({ at: [x, y], horizontal = false }: { at: Point; horizontal?: boolean }) {
  return (
    <path
      d={
        horizontal
          ? `M${x - 18} ${y}h4l3-9l6 18l6-18l6 18l6-18l3 9h2`
          : `M${x} ${y - 18}v4l9 3l-18 6l18 6l-18 6l18 6l-9 3v2`
      }
    />
  )
}

function Transistor({ spec: [bar, pin, top, bottom, arrow] }: { spec: (typeof transistors)[number] }) {
  const dir = Math.sign(pin - bar)
  return (
    <>
      <path d={`M${bar} ${top + 6}V${bottom - 8}M${pin} ${top}L${bar} ${top + 15}M${bar} ${bottom - 16}L${pin} ${bottom}`} />
      <path
        d={
          arrow === "top"
            ? `M${bar + dir * 4} ${top + 18}l${dir * 6} -12l${dir * 6} 8z`
            : `M${pin} ${bottom}l${-dir * 12} -3l${dir * 6} -8z`
        }
        fill="#000080"
        stroke="none"
      />
    </>
  )
}

const gridDots = Array.from({ length: 63 }, (_, row) =>
  Array.from({ length: 69 }, (_, col) => {
    const x = 45 + Math.round((col * 766) / 68) * 3
    const y = -537 + Math.round((row * 698) / 62) * 3
    return `M${x} ${y}h3v3h-3z`
  }).join(""),
).join("")

function Schematic() {
  return (
    // three drawing units per screen pixel at the default window size
    <svg
      viewBox="18 -549 2358 2118"
      preserveAspectRatio="xMidYMid meet"
      className="block h-full w-full bg-[#c0c0c0]"
      fill="none"
      strokeWidth="3"
      fontFamily="Liberation Sans, Arial, sans-serif"
      fontSize="12"
    >
      <path d={gridDots} fill="#000" shapeRendering="crispEdges" />
      <g stroke="#0000ff" shapeRendering="crispEdges">
        {wires.map((d) => (
          <path key={d} d={d} />
        ))}
        {downGrounds.map(([x, y]) => (
          <path key={`${x}-${y}`} d={`M${x - 10} ${y + 1}h20l-10 9z`} />
        ))}
        {upGrounds.map(([x, y]) => (
          <path key={`${x}-${y}`} d={`M${x - 10} ${y}h20l-10 -9z`} />
        ))}
      </g>
      <g fill="#0000ff" shapeRendering="crispEdges">
        {junctions.map(([x, y]) => (
          <rect key={`${x}-${y}`} x={x - 4} y={y - 4} width="9" height="9" />
        ))}
      </g>
      <g stroke="#000080" shapeRendering="crispEdges">
        {verticalResistors.map((at) => (
          <Resistor key={at.join()} at={at} />
        ))}
        {horizontalResistors.map((at) => (
          <Resistor key={at.join()} at={at} horizontal />
        ))}
        {verticalCaps.map(([x, y]) => (
          <path key={`${x}-${y}`} d={`M${x - 10} ${y - 3}h20M${x - 10} ${y + 3}h20M${x} ${y - 4}v-12M${x} ${y + 4}v12`} />
        ))}
        {horizontalCaps.map(([x, y]) => (
          <path key={`${x}-${y}`} d={`M${x - 3} ${y - 10}v20M${x + 3} ${y - 10}v20M${x - 4} ${y}h-12M${x + 4} ${y}h12`} />
        ))}
        {horizontalDiodes.map(([x, y]) => (
          <path key={`${x}-${y}`} d={`M${x - 18} ${y}h36M${x - 6} ${y - 8}v16l11 -8zM${x + 6} ${y - 9}v18`} />
        ))}
        {verticalDiodes.map(([x, y]) => (
          <path key={`${x}-${y}`} d={`M${x} ${y - 18}v36M${x - 8} ${y + 6}h16l-8 -11zM${x - 10} ${y - 6}h20`} />
        ))}
        {transistors.map((spec) => (
          <Transistor key={spec.join()} spec={spec} />
        ))}
        <path d="M2140 514l4 3l4-3v-8h6v11h4v-11h6v11h4v-11h6v8l4 3l4-3" />
      </g>
      <g stroke="#000080">
        <circle cx="171" cy="590" r="17" />
        <path d="M161 592q5-12 10 0t10 0M172 574v4M172 603v4" />
        <circle cx="1003" cy="889" r="16" />
        <path d="M993 885v8M1009 889h8" />
        <circle cx="1282" cy="889" r="16" />
        <path d="M1272 885v8M1288 889h8" />
        <circle cx="1603" cy="882" r="16" />
        <path d="M1593 878v8M1607 882h9M1611 878v8" />
        <circle cx="1735" cy="910" r="16" />
        <path d="M1735 918v-14M1730 908l5-5l5 5" />
      </g>
      <g fill="#101010">
        {labels.map(([x, y, text]) => (
          <text key={`${x}-${y}`} x={x} y={y}>
            {text}
          </text>
        ))}
        <text transform="translate(1450 256) rotate(-90)">Dpos</text>
        <text transform="translate(1450 816) rotate(-90)">Dneg</text>
        <text transform="translate(1004 495) rotate(-90)">4p C2</text>
      </g>
      <g fill="#1010e0">
        {comments.map(([x, y, text]) => (
          <text key={text} x={x} y={y}>
            {text}
          </text>
        ))}
      </g>
    </svg>
  )
}

export default function App() {
  return (
    <div className="flex h-screen flex-col overflow-hidden bg-[#d4d0c8] font-['Noto_Sans',sans-serif] text-black">
      <MenuBar />
      <Toolbar />
      <TabStrip />
      <main className="flex min-h-0 flex-1 border-l border-[#808080]">
        <div className="flex min-w-0 flex-1 border-l border-t border-r border-[#404040] border-t-[#d4d0c8] border-r-[#d4d0c8] pr-px">
          <ChildWindow
            active
            icon={
              <svg viewBox="0 0 20 20" fill="none" shapeRendering="crispEdges" className="h-5 w-5">
                <rect width="20" height="20" fill="#c0c0c0" />
                <path d="M1.500 0v18M0 17.500h20M4 19.500h16" stroke="#000" strokeDasharray="2 1" />
                <path d="M4 6l3-3M9 5l3 1M13 3l3-1M3 16h6M12 16h4" stroke="#0000ff" />
                <path d="M3 10l4 2M9 11h3M14 10l4 1" stroke="#ff0000" />
              </svg>
            }
          >
            <BodePlot />
          </ChildWindow>
          <ChildWindow icon={<TransistorGlyph className="h-5 w-4" />}>
            <Schematic />
          </ChildWindow>
        </div>
      </main>
      <footer className="mt-px flex h-[22px] shrink-0 items-stretch justify-between border-t border-white pl-[3px] text-[13px]">
        <span className="self-end leading-5">Ready</span>
        <span className="mt-0.5 w-[66px] border border-[#808080] border-r-white border-b-white" />
      </footer>
    </div>
  )
}
